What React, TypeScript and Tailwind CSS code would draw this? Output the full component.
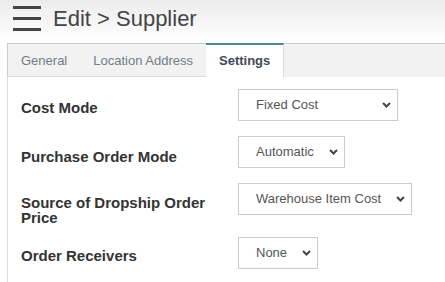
import React from "react";

const Chevron = () => (
  <svg width="9" height="6" viewBox="0 0 9 6" className="shrink-0">
    <path d="M1 1l3.5 3.5L8 1" fill="none" stroke="#444" strokeWidth="2" />
  </svg>
);

const FakeSelect = ({ value, width }: { value: string; width?: string }) => (
  <div
    className={`flex h-[32px] shrink-0 items-center justify-between border border-[#ccc] bg-white pl-[17px] pr-[6px] text-[13px] text-[#555] ${width ?? ""}`}
  >
    <span className="whitespace-nowrap">{value}</span>
    <span className="ml-[15px]">
      <Chevron />
    </span>
  </div>
);

const Row = ({
  label,
  value,
  height,
  labelTop,
  width,
}: {
  label: string;
  value: string;
  height: string;
  labelTop: string;
  width?: string;
}) => (
  <div className={`flex items-start ${height}`}>
    <div className={`w-[217px] shrink-0 pr-[20px] text-[15px] font-bold leading-[15px] text-[#333] ${labelTop}`}>
      {label}
    </div>
    <FakeSelect value={value} width={width} />
  </div>
);

export default function App() {
  return (
    <div
      className="h-[282px] w-[445px] overflow-hidden bg-white"
      style={{ fontFamily: '"Liberation Sans", Arial, sans-serif' }}
    >
      {/* header */}
      <div className="flex h-[43px] items-start bg-gradient-to-b from-[#ececec] to-white pl-[13px]">
        <div className="mt-[6px] flex w-[28px] flex-col gap-[8px]">
          <div className="h-[3px] bg-[#444]" />
          <div className="h-[3px] bg-[#444]" />
          <div className="h-[3px] bg-[#444]" />
        </div>
        <div className="ml-[12px] mt-[6px] text-[22px] leading-[26px] text-[#444]">Edit &gt; Supplier</div>
      </div>

      {/* tabs */}
      <div className="ml-[7px] flex h-[34px] border-l border-t border-[#ccc] bg-[#f2f2f2]">
        <div className="flex items-center border-b border-[#ddd] px-[13px] pt-[2px] text-[13px] text-[#737b86]">General</div>
        <div className="flex items-center border-b border-[#ddd] px-[13px] pt-[2px] text-[13px] text-[#737b86]">Location Address</div>
        <div className="-mt-px flex items-center border-r border-t-2 border-r-[#ddd] border-t-[#4d8597] bg-white px-[13px] text-[13px] font-bold text-[#3e4a58]">
          Settings
        </div>
      </div>

      {/* panel */}
      <div className="ml-[7px] h-[205px] border-l border-[#ddd] pl-[13px] pt-[12px]">
        <Row label="Cost Mode" value="Fixed Cost" height="h-[47px]" labelTop="mt-[11px]" width="w-[160px]" />
        <Row label="Purchase Order Mode" value="Automatic" height="h-[47px]" labelTop="mt-[13px]" />
        <Row label="Source of Dropship Order Price" value="Warehouse Item Cost" height="h-[54px]" labelTop="mt-[12px]" />
        <Row label="Order Receivers" value="None" height="h-[40px]" labelTop="mt-[11px]" />
      </div>
    </div>
  );
}
